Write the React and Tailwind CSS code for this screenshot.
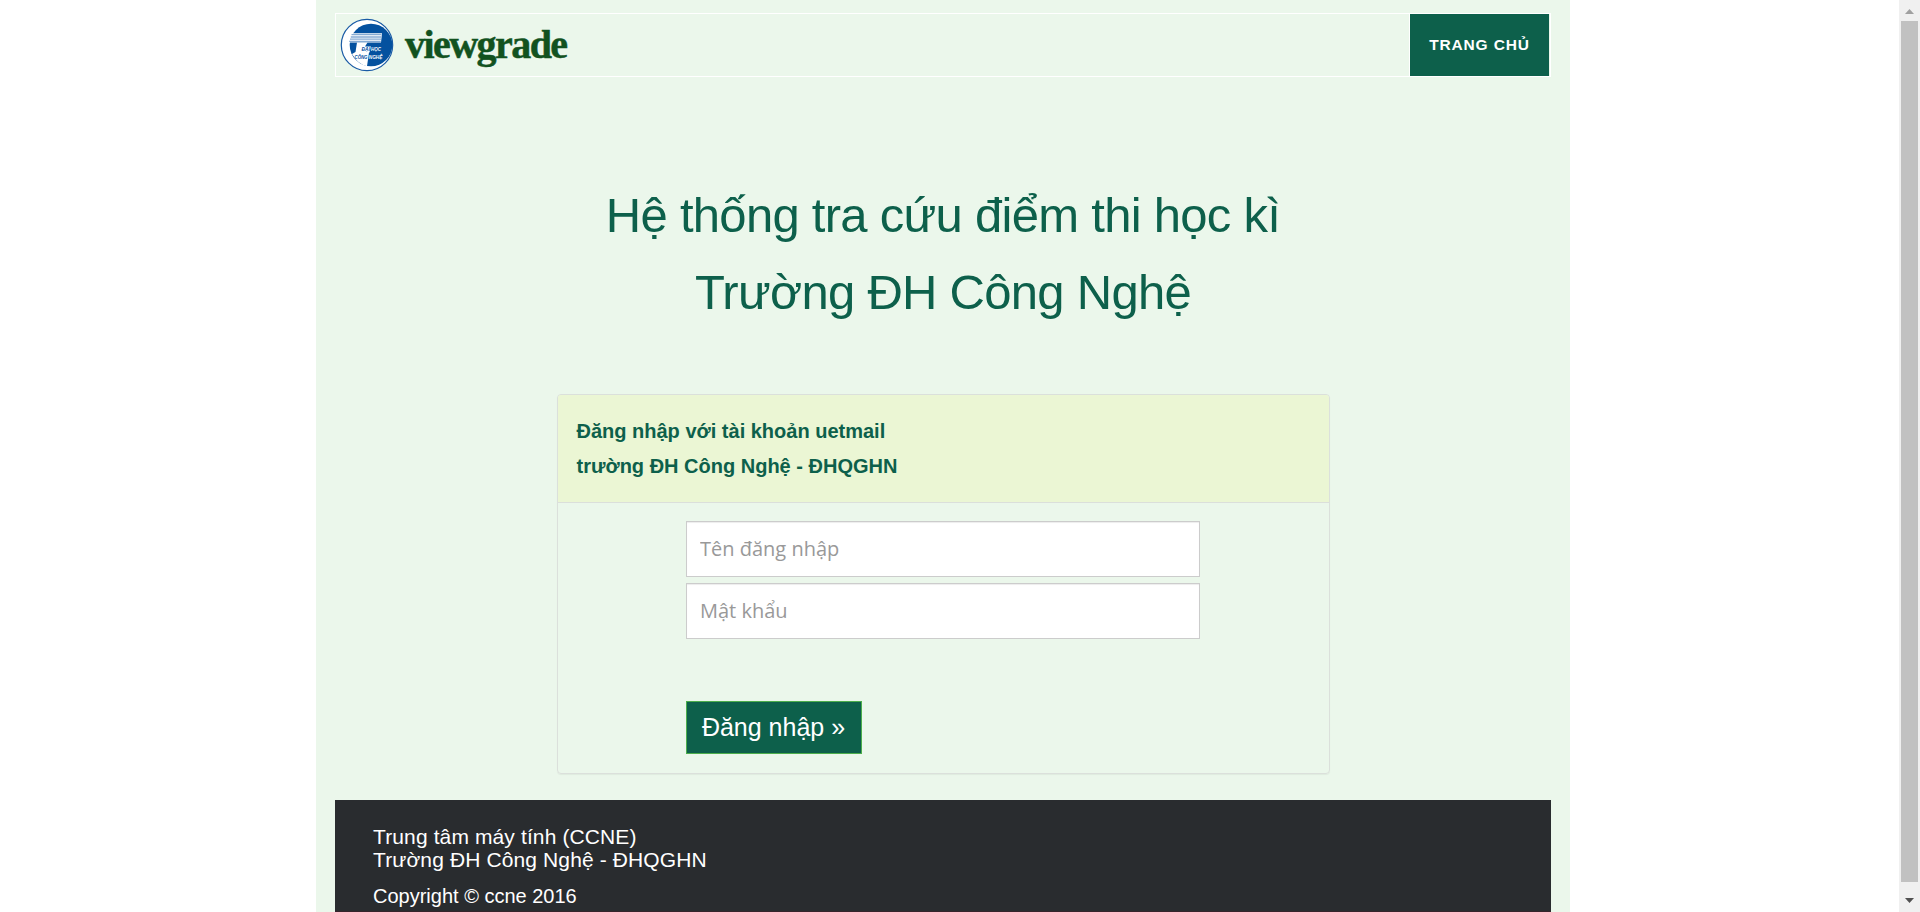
function Logo() {
  return (
    <svg className="h-[54px] w-[54px] shrink-0" viewBox="0 0 54 54">
      <circle cx="27" cy="27" r="25.7" fill="#fff" stroke="#1a5ba5" strokeWidth="1.2" />
      <circle cx="31" cy="27" r="21.300" fill="#04519f" />
      <path d="M11.500 15.200H42L41 24.500H8.800Z" fill="#fff" />
      <path d="M11.500 16.700H41.500M10.800 19H41.300M10 21.200H41M9.200 23.400H40.800" stroke="#86abd3" strokeWidth="1.3" />
      <path d="M17 24.500H27.500L25 28.500H31L29.500 34.500H29L27 48.200Q18 46.500 12 36L15.500 34Z" fill="#fff" />
      <g fontFamily="Liberation Sans" fontWeight="700" fontStyle="italic" fontSize="5.800">
        <text x="21.500" y="33.200" fill="#04519f" textLength="8.500" lengthAdjust="spacingAndGlyphs">ĐẠI</text>
        <text x="31" y="33.200" fill="#fff" textLength="10" lengthAdjust="spacingAndGlyphs">HỌC</text>
        <text x="14.500" y="41" fill="#04519f" textLength="13" lengthAdjust="spacingAndGlyphs">CÔNG</text>
        <text x="28.800" y="41" fill="#fff" textLength="13.500" lengthAdjust="spacingAndGlyphs">NGHỆ</text>
      </g>
    </svg>
  );
}

function Header() {
  return (
    <header className="flex h-16 w-[1216px] items-stretch justify-between border border-white">
      <a className="flex items-center pb-px pl-1">
        <Logo />
        <span className="ml-[11px] font-['Liberation_Serif',serif] text-[40px] leading-none font-bold tracking-[-1.55px] text-[#12521f] [-webkit-text-stroke:0.5px_#12521f]">viewgrade</span>
      </a>
      <nav className="flex border-l border-white pr-px">
        <a className="flex w-[139px] items-center justify-center bg-[#0d604b] pb-px text-[15.5px] font-bold tracking-[0.85px] text-white">TRANG CHỦ</a>
      </nav>
    </header>
  );
}

function LoginPanel() {
  const field =
    "block h-14 w-[514px] border border-[#ccc] bg-white px-[13.5px] pb-0.5 font-['Open_Sans',sans-serif] text-[20px] shadow-[inset_0_1px_1px_rgba(0,0,0,0.075)] outline-none placeholder:text-[#999]";
  return (
    <section className="mx-auto h-[380px] w-[773px] rounded-[4px] border border-[#dbe0db] shadow-[0_1px_1px_rgba(0,0,0,0.05)]">
      <h2 className="h-[108px] rounded-t-[3px] border-b border-[#dbdfdb] bg-[#ebf6d4] pt-[19px] pl-[19px] text-[20px] leading-[35px] font-bold text-[#0d604b]">
        Đăng nhập với tài khoản uetmail
        <br />
        trường ĐH Công Nghệ - ĐHQGHN
      </h2>
      <form className="flex flex-col items-start gap-1.5 pt-[18px] pl-32">
        <input className={field} placeholder="Tên đăng nhập" />
        <input className={field} placeholder="Mật khẩu" />
        <button type="button" className="mt-14 h-[53px] w-44 border border-[#4cae4c] bg-[#0d604b] text-[25px] leading-none text-white">
          Đăng nhập »
        </button>
      </form>
    </section>
  );
}

function Scrollbar() {
  return (
    <aside className="flex w-[21px] shrink-0 flex-col items-center bg-[#f0f0f0]">
      <div className="flex h-[21px] items-center justify-center pt-0.5">
        <svg width="9" height="5" viewBox="0 0 9 5"><path d="M0 5H9L4.500 0Z" fill="#a0a0a0" /></svg>
      </div>
      <div className="h-[861px] w-[17px] bg-[#c1c1c1]" />
      <div className="flex flex-1 items-center justify-center pt-[7px]">
        <svg width="9" height="5" viewBox="0 0 9 5"><path d="M0 0H9L4.500 5Z" fill="#505050" /></svg>
      </div>
    </aside>
  );
}

export default function App() {
  return (
    <div className="flex h-[912px] w-[1920px] overflow-hidden bg-white font-['Liberation_Sans',Arial,sans-serif]">
      <div className="flex flex-1 pl-[316px]">
        <main className="flex h-full w-[1254px] flex-col bg-[#ebf7eb] px-[19px] pt-[13px]">
          <Header />
          <h1 className="mt-[100px] mb-[63px] text-center text-[49px] leading-[77px] tracking-[-0.72px] text-[#0d604b]">
            Hệ thống tra cứu điểm thi học kì
            <br />
            Trường ĐH Công Nghệ
          </h1>
          <LoginPanel />
          <footer className="mt-[26px] w-[1216px] flex-1 border-b border-[#36242b] bg-[#292c2f] pt-[25px] pl-[38px] text-white">
            <p className="text-[21px] leading-[23px] tracking-[0.12px]">
              Trung tâm máy tính (CCNE)
              <br />
              Trường ĐH Công Nghệ - ĐHQGHN
            </p>
            <p className="mt-[14px] text-[20px] leading-[23px]">Copyright © ccne 2016</p>
          </footer>
        </main>
      </div>
      <Scrollbar />
    </div>
  );
}
